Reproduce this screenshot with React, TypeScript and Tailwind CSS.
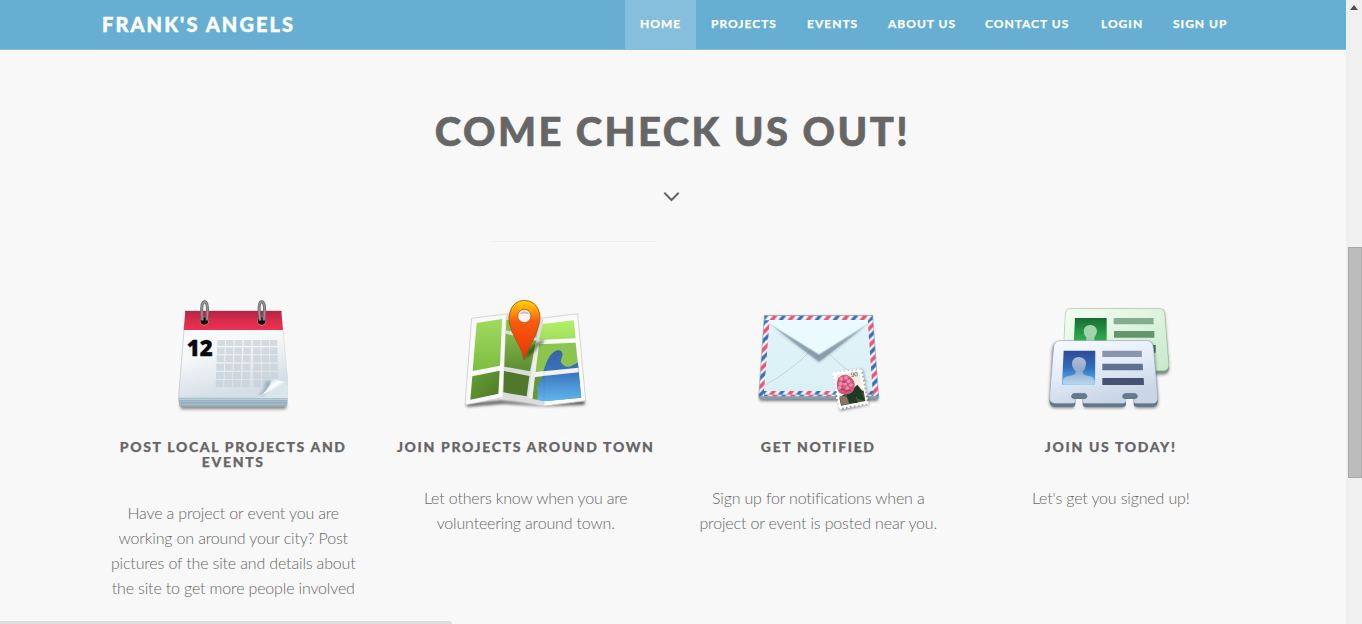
import type { ReactNode } from "react";

function CalendarIcon() {
  const cols = [157, 183, 209, 236, 263, 289, 314];
  const rows = [150, 172, 196, 221, 246, 270];
  return (
    <svg width="140" height="130" viewBox="-6 0 420 390" aria-hidden="true">
      <defs>
        <linearGradient id="calRed" x1="0" y1="0" x2="0" y2="1">
          <stop offset="0" stopColor="#b52442" />
          <stop offset="0.5" stopColor="#d72c4c" />
          <stop offset="1" stopColor="#f0304f" />
        </linearGradient>
        <linearGradient id="calPage" x1="0" y1="0" x2="0.3" y2="1">
          <stop offset="0" stopColor="#ffffff" />
          <stop offset="0.55" stopColor="#f4f6f8" />
          <stop offset="1" stopColor="#d3dee6" />
        </linearGradient>
        <linearGradient id="calCurl" x1="0" y1="0" x2="1" y2="1">
          <stop offset="0.2" stopColor="#b4cdd9" />
          <stop offset="0.45" stopColor="#ffffff" />
          <stop offset="0.8" stopColor="#b9d3df" />
        </linearGradient>
        <filter id="calBlur" x="-10%" y="-100%" width="120%" height="300%">
          <feGaussianBlur stdDeviation="4" />
        </filter>
      </defs>
      <rect x="46" y="338" width="318" height="20" rx="8" fill="#555" opacity=".65" filter="url(#calBlur)" />
      <path d="M40 322 L368 322 L367 342 Q366 350 356 350 L52 350 Q43 350 42 342 Z" fill="#95adbc" />
      <path d="M40 326 H368 V331 H40Z" fill="#b9cdd8" />
      <path d="M41 334 H367 V337 H41Z" fill="#a9c1ce" />
      <path d="M42 341 H367 V344 H43Z" fill="#a9c1ce" />
      <path d="M62 63 H348 L369 270 V321 Q369 325 365 325 H43 Q39 325 40 319 Z" fill="url(#calPage)" />
      <path d="M57 120 L41 318 Q41 323 46 323 H275" fill="none" stroke="#c2ced6" strokeWidth="2.5" />
      <path d="M354 120 L368 270" fill="none" stroke="#d3dbe1" strokeWidth="2" />
      <path d="M61 63 H349 L354 120 H56 Z" fill="url(#calRed)" />
      <path d="M61 64 H349" stroke="#a62d48" strokeWidth="3" />
      <g fill="#c8d1d9" opacity=".72">
        {rows.map((y, r) =>
          cols.map((x, c) => (
            <rect key={`${r}-${c}`} x={x - r + (c > 3 ? r * 1.5 : 0)} y={y} width={23} height={r === 0 ? 18 : 21} />
          )),
        )}
      </g>
      <text x="65" y="198" fontFamily="Open Sans, sans-serif" fontWeight="800" fontSize="67" textLength="78" lengthAdjust="spacingAndGlyphs" fill="#090909" stroke="#090909" strokeWidth="1">12</text>
      <path d="M273 324 Q300 300 309 275 Q312 264 328 266 L361 275 L368 285 V324Z" fill="#dbe6ec" />
      <path d="M279 319 Q300 299 303 276 L318 268 L320 285 L296 316Z" fill="#587b91" opacity=".5" filter="url(#calBlur)" />
      <path d="M282 320 Q309 305 322 267 Q341 274 361 275 Q337 293 282 320Z" fill="url(#calCurl)" />
      {[118, 290].map((x) => {
        const ring = x === 118 ? "M112 88 Q106 35 119 35 Q131 35 126 88" : "M285 88 Q278 35 290 35 Q303 35 297 88";
        return (
          <g key={x}>
            <circle cx={x} cy="94" r="13.5" fill="#e86a80" />
            <circle cx={x} cy="93" r="11.5" fill="#160c10" />
            <path d={ring} fill="none" stroke="#696969" strokeWidth="9" strokeLinecap="round" />
            <path d={ring} fill="none" stroke="#949494" strokeWidth="4.5" strokeLinecap="round" />
          </g>
        );
      })}
    </svg>
  );
}

function MapIcon() {
  return (
    <svg width="140" height="130" viewBox="3 -1 420 390" aria-hidden="true">
      <defs>
        <linearGradient id="mapA" x1="0" y1="0" x2="0" y2="1">
          <stop offset="0" stopColor="#a0da5d" />
          <stop offset="1" stopColor="#7ebd42" />
        </linearGradient>
        <linearGradient id="mapA2" x1="0" y1="0" x2="1" y2="1">
          <stop offset="0" stopColor="#6ba038" />
          <stop offset="1" stopColor="#4b7826" />
        </linearGradient>
        <linearGradient id="mapB" x1="0" y1="0" x2="0" y2="1">
          <stop offset="0" stopColor="#83b74a" />
          <stop offset="1" stopColor="#5c8c33" />
        </linearGradient>
        <linearGradient id="mapC" x1="0" y1="0" x2="0" y2="1">
          <stop offset="0" stopColor="#b2ee69" />
          <stop offset="1" stopColor="#a2df5d" />
        </linearGradient>
        <linearGradient id="mapWater" x1="0" y1="0" x2="0" y2="1">
          <stop offset="0" stopColor="#3862a8" />
          <stop offset="0.4" stopColor="#3a73bb" />
          <stop offset="1" stopColor="#62b7f0" />
        </linearGradient>
        <linearGradient id="mapPin" x1="0" y1="0" x2="0" y2="1">
          <stop offset="0" stopColor="#ffd50a" />
          <stop offset="0.18" stopColor="#ff9b09" />
          <stop offset="0.36" stopColor="#f85b0c" />
          <stop offset="1" stopColor="#ea3306" />
        </linearGradient>
        <filter id="mapBlur" x="-20%" y="-40%" width="140%" height="180%">
          <feGaussianBlur stdDeviation="4" />
        </filter>
        <clipPath id="mapRight">
          <path d="M260 104 L357 93 L379 322 L270 333 L229 326 Z" />
        </clipPath>
      </defs>
      <path d="M34 339 L140 330 L266 344 L389 330 V343 L270 348 L145 340 L36 349Z" fill="#333" opacity=".8" filter="url(#mapBlur)" />
      <path d="M50 84 L153 71 L265 83 L368 70 L392 331 L268 347 L142 322 L30 344Z" fill="#fafafa" stroke="#c2c2c2" strokeWidth="2" />
      <path d="M153 72 L265 84 L268 346 L142 322Z" fill="#dcdcdc" />
      <path d="M65 98 L141 86 L135 226 L53 242Z" fill="url(#mapA)" />
      <path d="M52 258 L134 241 L130 310 L46 328Z" fill="url(#mapA2)" />
      <path d="M154 88 L251 99 L244 142 L153 120Z" fill="#82bd48" />
      <path d="M152 130 L244 151 L225 243 L148 229Z" fill="url(#mapB)" />
      <path d="M147 242 L223 257 L215 318 L145 306Z" fill="#50772c" />
      <path d="M263 101 L356 90 L362 144 L252 149Z" fill="url(#mapC)" />
      <path d="M250 162 L362 157 L370 232 L237 246Z" fill="#8bc54e" />
      <path d="M237 260 L370 246 L379 322 L270 332 L232 326Z" fill="#659933" />
      <path d="M245 292 Q262 266 266 240 Q278 198 297 184 Q318 173 323 191 L317 214 Q328 234 347 228 L373 214 L383 323 L270 336 L246 330 Q251 303 245 292Z" fill="url(#mapWater)" clipPath="url(#mapRight)" />
      <path d="M237 246 L370 232 L371 246 L236 260Z" fill="#f2f2f2" />
      <path d="M240 160 L254 145 L232 326 L220 322Z" fill="#ededed" />
      <path d="M267 238 V343" stroke="#345" strokeWidth="2" opacity=".12" />
      <path d="M208 207 Q222 152 274 150 Q247 165 238 184Z" fill="#17330e" opacity=".6" filter="url(#mapBlur)" />
      <path d="M208 209 Q203 184 182 147 Q155 95 164 68 Q174 31 208 30 Q245 31 254 70 Q259 97 236 145 Q217 180 208 209Z" fill="url(#mapPin)" stroke="#a5530a" strokeWidth="2.5" />
      <circle cx="208" cy="77" r="20" fill="#f4f4f4" stroke="#bd5e20" strokeWidth="3" />
      <path d="M190 73 Q208 53 226 73 Q208 66 190 73" fill="#cbbbb0" />
    </svg>
  );
}

function MailIcon() {
  return (
    <svg width="140" height="130" viewBox="0 -30 420 390" aria-hidden="true">
      <defs>
        <linearGradient id="mailPaper" x1="0" y1="0" x2="0" y2="1">
          <stop offset="0" stopColor="#e1f3f9" />
          <stop offset="1" stopColor="#d9f1f6" />
        </linearGradient>
        <pattern id="airV" width="51" height="51" patternUnits="userSpaceOnUse" y="20">
          <rect width="51" height="51" fill="#edf4fb" />
          <path d="M0 14 L51 -37 V-22 L0 29Z M0 65 L51 14 V29 L0 80Z" fill="#f2516f" />
          <path d="M0 39 L51 -12 V3 L0 54Z M0 90 L51 39 V54 L0 105Z" fill="#426cb3" />
        </pattern>
        <pattern id="airH" width="54" height="17" patternUnits="userSpaceOnUse" x="8" y="46">
          <rect width="54" height="17" fill="#edf4fb" />
          <path d="M14 0 H28 L14 17 H0Z" fill="#f2516f" />
          <path d="M41 0 H54 L40 17 H27Z" fill="#426cb3" />
        </pattern>
        <filter id="mailBlur" x="-20%" y="-40%" width="140%" height="180%">
          <feGaussianBlur stdDeviation="4" />
        </filter>
      </defs>
      <rect x="35" y="287" width="355" height="16" rx="5" fill="#444" opacity=".7" filter="url(#mailBlur)" />
      <path d="M32 280 H392 V294 Q391 298 386 298 H38 Q32 298 32 292Z" fill="#869dac" />
      <path d="M49 46 H374 L392 289 H32Z" fill="url(#airV)" />
      <path d="M49 46 H374 V61 H49Z" fill="url(#airH)" />
      <path d="M48 272 H375 V289 H48Z" fill="url(#airH)" />
      <path d="M49 46 H374 L392 289 H32Z" fill="none" stroke="#93a6b2" strokeWidth="2" />
      <path d="M65 60 H359 L374 273 H48Z" fill="url(#mailPaper)" />
      <path d="M49 257 Q130 212 188 152 M237 153 Q285 211 360 245" fill="none" stroke="#b6c7ce" strokeWidth="2" />
      <path d="M75 80 L213 186 L350 80 L213 163Z" fill="#536b7e" opacity=".55" filter="url(#mailBlur)" />
      <path d="M72 77 L213 186 L354 77 L213 165Z" fill="#718392" opacity=".4" />
      <path d="M64 60 H360 V71 L213 163 L64 71Z" fill="#eafaff" />
      <path d="M64 71 L213 163 L360 71" fill="none" stroke="#aab9c6" strokeWidth="1.5" />
      <path d="M260 221 L344 208 L363 314 L276 333Z" fill="#333" opacity=".55" filter="url(#mailBlur)" />
      <path d="M256 219 L339 209 L358 310 L274 325Z" fill="#fff" stroke="#fff" strokeWidth="8" strokeDasharray="7 5" />
      <path d="M263 224 L333 215 L352 303 L279 317Z" fill="#f2efe3" />
      <path d="M274 293 L294 278 L322 269 L347 272 L352 303 L279 317Z" fill="#4b5140" />
      <path d="M302 278 L328 254 L346 277 L322 291Z M293 278 L320 283 L329 308 L305 310Z M310 273 L343 283 L350 303 L330 296Z" fill="#1d3b24" />
      <path d="M275 287 L296 290 L303 312 L280 315Z" fill="#8b7660" />
      <path d="M271 234 Q285 220 299 226 Q320 237 320 254 Q322 276 301 282 Q282 288 271 274 Q262 256 271 234Z" fill="#d4577c" />
      <g fill="#ee91a8">
        {[[280, 237], [294, 233], [302, 244], [278, 251], [291, 252], [309, 255], [275, 263], [298, 264]].map(([x, y]) => (
          <circle key={`${x}-${y}`} cx={x} cy={y} r="5.5" />
        ))}
      </g>
      <path d="M278 270 q7 -6 12 2 M293 276 q8 -8 15 -3 M285 244 q5 5 7 0" fill="none" stroke="#b33462" strokeWidth="4" />
      <text x="309" y="231" fontFamily="Liberation Sans, sans-serif" fontSize="19" fill="#444" transform="rotate(-7 309 231)">90</text>
    </svg>
  );
}

function CardsIcon() {
  return (
    <svg width="140" height="130" viewBox="3 -16 420 390" aria-hidden="true">
      <defs>
        <linearGradient id="greenCard" x1="0" y1="0" x2="1" y2="1">
          <stop offset="0" stopColor="#f5fff3" />
          <stop offset="1" stopColor="#c7e8cb" />
        </linearGradient>
        <linearGradient id="greenPhoto" x1="0" y1="0" x2="0" y2="1">
          <stop offset="0" stopColor="#176c33" />
          <stop offset="1" stopColor="#35bd56" />
        </linearGradient>
        <linearGradient id="blueCard" x1="0" y1="0" x2="0.4" y2="1">
          <stop offset="0" stopColor="#f7faff" />
          <stop offset="0.5" stopColor="#e6edf9" />
          <stop offset="1" stopColor="#c9d6e6" />
        </linearGradient>
        <linearGradient id="bluePhoto" x1="0" y1="0" x2="0" y2="1">
          <stop offset="0" stopColor="#2d4b98" />
          <stop offset="0.5" stopColor="#326dbc" />
          <stop offset="1" stopColor="#5cc3f5" />
        </linearGradient>
        <linearGradient id="person" x1="0" y1="0" x2="0" y2="1">
          <stop offset="0" stopColor="#b1bfd2" />
          <stop offset="0.5" stopColor="#91a9cf" />
          <stop offset="1" stopColor="#b8d9f0" />
        </linearGradient>
        <filter id="cardBlur" x="-20%" y="-20%" width="140%" height="150%">
          <feGaussianBlur stdDeviation="4" />
        </filter>
      </defs>
      <path d="M90 44 H361 Q372 44 374 55 L387 218 Q388 238 369 238 H75Z" fill="#333" opacity=".55" filter="url(#cardBlur)" />
      <path d="M91 40 H358 Q372 40 374 55 L387 208 V218 Q385 234 369 234 H67 L76 56 Q77 40 91 40Z" fill="#75997e" />
      <path d="M91 40 H358 Q372 40 374 55 L386 207 Q387 226 369 226 H67 L76 56 Q77 40 91 40Z" fill="url(#greenCard)" stroke="#a8c6a9" strokeWidth="1.5" />
      <path d="M105 68 H200 V150 H101Z" fill="url(#greenPhoto)" />
      <path d="M151 89 Q170 89 171 109 Q169 120 163 126 V140 H139 V126 Q131 119 131 107 Q132 90 151 89Z" fill="#a4d1ae" />
      <path d="M221 68 H341 V87 H221Z" fill="#85ad8d" />
      <path d="M222 107 H343 V127 H222Z" fill="#63966e" />
      <path d="M224 149 H347 V172 H224Z" fill="#3f744b" />
      <path d="M37 162 Q39 142 56 140 H321 Q341 140 342 161 L354 309 V323 Q353 338 339 338 H286 V316 H252 V338 H132 V316 H102 V338 H45 Q31 338 29 323 V306Z" fill="#333" opacity=".65" filter="url(#cardBlur)" />
      <path d="M106 296 H128 V345 H106Z M258 296 H281 V345 H258Z" fill="#f2f3f4" />
      <path d="M41 157 Q43 136 60 136 H321 Q338 137 340 157 L353 302 V318 Q352 334 337 334 H287 Q282 334 281 328 V311 H258 V328 Q257 334 251 334 H135 Q129 334 128 328 V311 H106 V328 Q104 334 99 334 H45 Q31 334 29 320 V302Z" fill="#60768c" />
      <path d="M41 157 Q43 136 60 136 H321 Q338 137 340 157 L353 302 V310 Q351 324 338 324 H287 Q281 324 281 315 V311 H286 Q293 309 293 303 Q291 294 284 294 H256 Q247 296 247 304 Q248 310 258 311 V317 Q257 324 250 324 H134 Q129 324 128 316 V311 H134 Q141 309 142 303 Q140 294 133 294 H103 Q94 296 94 304 Q95 310 106 311 V317 Q105 324 98 324 H44 Q31 323 29 310 V302Z" fill="url(#blueCard)" stroke="#a6b4c5" strokeWidth="1.5" />
      <path d="M103 294 H133 Q140 295 142 303 Q140 311 133 311 H128 V308 H106 V311 H103 Q95 309 94 303 Q96 294 103 294Z" fill="#647a91" />
      <path d="M256 294 H284 Q292 296 293 303 Q290 311 284 311 H281 V308 H258 V311 H254 Q247 308 247 303 Q249 295 256 294Z" fill="#647a91" />
      <path d="M71 166 H166 L165 269 H66Z" fill="url(#bluePhoto)" />
      <path d="M69 268 V256 Q70 245 86 242 Q108 239 108 229 Q96 219 96 204 Q97 186 117 185 Q137 187 138 204 Q137 221 128 229 Q127 239 147 242 Q164 245 164 261 V268Z" fill="url(#person)" />
      <path d="M187 166 H305 L306 185 H187Z" fill="#8796ad" />
      <path d="M187 205 H308 L309 225 H187Z" fill="#60718d" />
      <path d="M187 248 H311 L312 269 H187Z" fill="#455371" />
    </svg>
  );
}

const navItems = [
  { label: "HOME", width: "w-[71px]" },
  { label: "PROJECTS", width: "w-[96px]" },
  { label: "EVENTS", width: "w-[81px]" },
  { label: "ABOUT US", width: "w-[97px]" },
  { label: "CONTACT US", width: "w-[116px]" },
  { label: "LOGIN", width: "w-[72px]" },
  { label: "SIGN UP", width: "w-[84px]" },
];

function Feature({ icon, title, children }: { icon: ReactNode; title: ReactNode; children: ReactNode }) {
  return (
    <article className="flex flex-col items-center text-center">
      {icon}
      <h3 className="mt-[19px] whitespace-nowrap text-[14px] leading-[15px] font-black tracking-[1.65px] [-webkit-text-stroke:0.25px_#666]">{title}</h3>
      <p className="mt-[31px] whitespace-nowrap text-[16px] leading-[25px] font-light tracking-[-0.16px]">{children}</p>
    </article>
  );
}

export default function App() {
  return (
    <div className="flex h-[624px] w-full overflow-hidden bg-[#f8f8f8] font-['Lato',sans-serif] text-[#666]">
      <div className="relative flex min-w-0 flex-1 flex-col">
        <header className="flex h-[50px] shrink-0 justify-between border-b border-[#87bfdb] bg-[#67afd2] pr-[104px] pl-[102px] text-white">
          <a className="text-[20px] leading-[48px] font-black tracking-[2.08px] whitespace-nowrap [-webkit-text-stroke:0.4px_white]">FRANK'S ANGELS</a>
          <nav className="flex">
            {navItems.map(({ label, width }) => (
              <a
                key={label}
                className={`${width} ${label === "HOME" ? "bg-[#86bfdb]" : ""} pl-[15px] text-[12px] leading-[48px] font-bold tracking-[1px] whitespace-nowrap [-webkit-text-stroke:0.25px_white]`}
              >
                {label}
              </a>
            ))}
          </nav>
        </header>
        <main className="flex flex-col">
          <h2 className="mt-[57px] pr-[1px] text-center text-[40px] leading-[48px] font-black tracking-[2.45px] [-webkit-text-stroke:0.6px_#666]">COME CHECK US OUT!</h2>
          <svg className="mt-[36px] ml-[663px]" width="17" height="12" viewBox="0 0 17 12" fill="none" stroke="#666" strokeWidth="2">
            <path d="M1.3 1.8 L8.5 9 L15.7 1.8" />
          </svg>
          <hr className="mt-[38px] ml-[492px] w-[165px] border-[#eee]" />
          <section className="mt-[48px] ml-[87px] grid w-[1170px] grid-cols-4">
            <Feature icon={<CalendarIcon />} title={<>POST LOCAL PROJECTS AND<br />EVENTS</>}>
              Have a project or event you are<br />working on around your city? Post<br />pictures of the site and details about<br />the site to get more people involved
            </Feature>
            <Feature icon={<MapIcon />} title="JOIN PROJECTS AROUND TOWN">
              Let others know when you are<br />volunteering around town.
            </Feature>
            <Feature icon={<MailIcon />} title="GET NOTIFIED">
              Sign up for notifications when a<br />project or event is posted near you.
            </Feature>
            <Feature icon={<CardsIcon />} title="JOIN US TODAY!">Let's get you signed up!</Feature>
          </section>
        </main>
        <div className="absolute bottom-0 left-0 h-[3px] w-[452px] rounded-tr-[3px] bg-[#dedede]" />
      </div>
      <aside className="flex w-4 shrink-0 flex-col items-center bg-[#f0f0f0]">
        <svg className="mt-[5px]" width="8" height="5" viewBox="0 0 8 5">
          <path d="M0 5 L4 0 L8 5Z" fill="#505050" />
        </svg>
        <div className="mt-[237px] ml-px h-[231px] w-[14px] border border-[#a8a8a8] bg-[#bcbcbc]" />
      </aside>
    </div>
  );
}
